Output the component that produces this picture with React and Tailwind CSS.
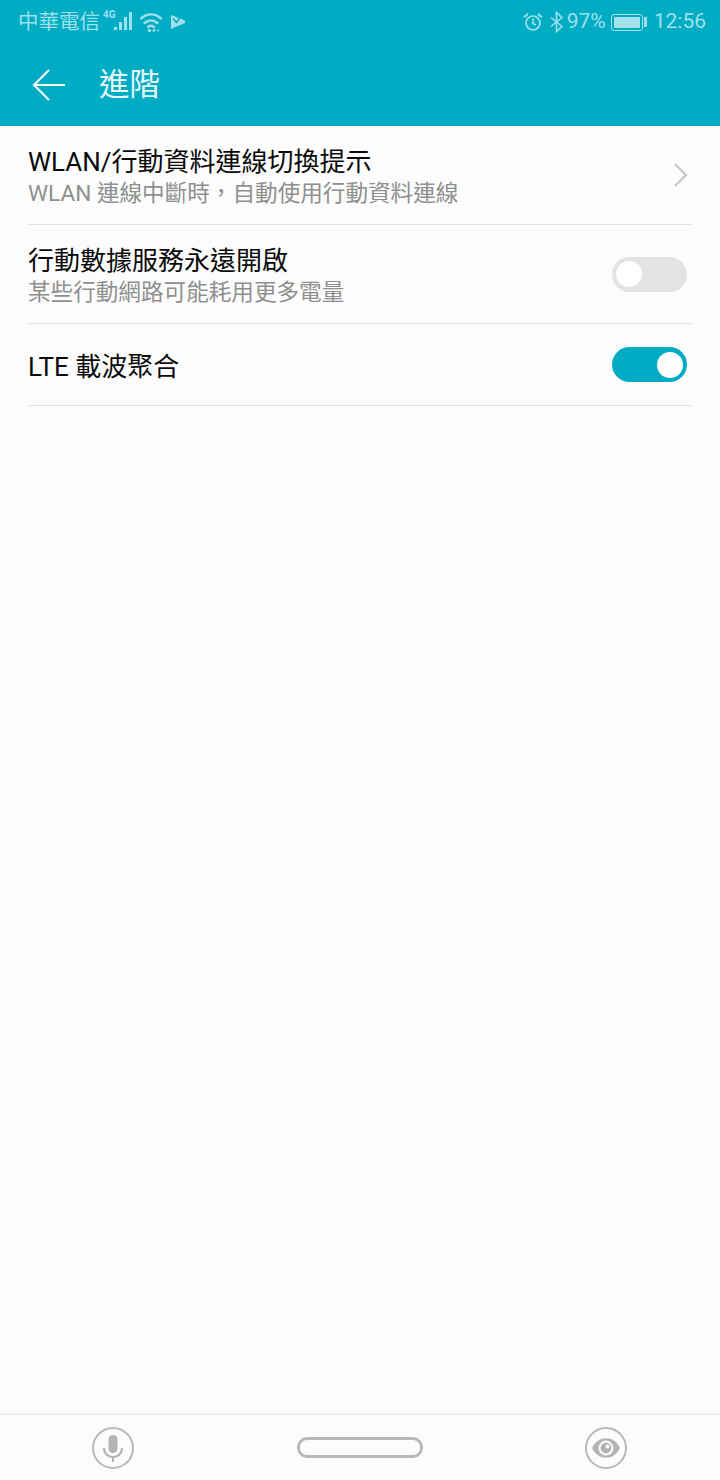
const FONT = "font-['Roboto','Noto_Sans_CJK_TC',sans-serif]";

function Signal() {
  return (
    <svg width="34" height="24" viewBox="0 0 34 24" className="text-[#9fe0ea]">
      <text x="0" y="8" fontSize="10" fontWeight="700" fill="currentColor" fontFamily="Roboto">4G</text>
      <rect x="11" y="17" width="3" height="3" fill="currentColor" />
      <rect x="16" y="12" width="3" height="8" fill="currentColor" />
      <rect x="21" y="7" width="3" height="13" fill="currentColor" />
      <rect x="26" y="2" width="3" height="18" fill="currentColor" />
    </svg>
  );
}

function Wifi() {
  return (
    <svg width="24" height="24" viewBox="0 0 24 24" fill="none" stroke="#9fe0ea" strokeWidth="2.4" strokeLinecap="round">
      <path d="M2 8.5C8 3 16 3 22 8.5" />
      <path d="M5.5 13C9.5 9.5 14.5 9.5 18.5 13" />
      <path d="M9 17C10.8 15.6 13.2 15.6 15 17" />
      <circle cx="10.5" cy="20.5" r="1.7" fill="#9fe0ea" stroke="none" />
      <circle cx="15" cy="20.5" r="1.4" fill="#9fe0ea" stroke="none" />
      <circle cx="19" cy="20.5" r="1" fill="#9fe0ea" stroke="none" />
    </svg>
  );
}

function Flag() {
  return (
    <svg width="16" height="16" viewBox="0 0 16 16">
      <path d="M1 1L15 6.5V9L1 15Z" fill="#9fe0ea" />
      <path d="M3 4.5L6.5 8.5L11.5 1.5" fill="none" stroke="#00acc4" strokeWidth="1.5" />
    </svg>
  );
}

function Alarm() {
  return (
    <svg width="20" height="20" viewBox="0 0 20 20" fill="none" stroke="#9fe0ea" strokeWidth="1.7">
      <circle cx="10" cy="11" r="7" />
      <path d="M10 6.5V11.5L13 13" />
      <path d="M1.2 5.2L5 1.8M18.8 5.2L15 1.8" strokeWidth="2" />
    </svg>
  );
}

function Bluetooth() {
  return (
    <svg width="15" height="22" viewBox="0 0 15 22" fill="none" stroke="#9fe0ea" strokeWidth="1.6">
      <path d="M2 6.5L13 15.5L7.5 20.5V1.5L13 6.5L2 15.5" />
    </svg>
  );
}

function Battery() {
  return (
    <div className="flex items-center gap-[1px]">
      <div className="w-[32px] h-[17px] rounded-[3px] border border-[#9fe0ea] p-[2px]">
        <div className="w-full h-full rounded-[1px] bg-[#a5e1ea]" />
      </div>
      <div className="w-[3px] h-[10px] rounded-r-[1px] bg-[#9fe0ea]" />
    </div>
  );
}

function Toggle({ on }) {
  return (
    <div className={`w-[75px] h-[35px] rounded-full p-[4px] flex ${on ? "bg-[#00acc4] justify-end" : "bg-[#e3e3e3] justify-start"}`}>
      <div className="w-[26px] h-[26px] mt-[0.5px] rounded-full bg-white" />
    </div>
  );
}

function Row({ title, sub, right, className }) {
  return (
    <div className={`flex items-center justify-between border-b border-[#e4e4e4] ${className}`}>
      <div className="flex flex-col pt-[5px]">
        <div className="text-[26px] leading-[32px] text-[#0a0a0a]">{title}</div>
        {sub && <div className="text-[22.6px] leading-[32px] text-[#8f8f8f] whitespace-nowrap">{sub}</div>}
      </div>
      {right}
    </div>
  );
}

export default function App() {
  return (
    <div className={`w-[720px] h-[1480px] flex flex-col bg-[#fcfcfc] ${FONT}`}>
      <div className="h-[126px] bg-[#00acc4] flex flex-col shrink-0">
        <div className="h-[44px] pl-[18px] pr-[14px] flex items-center justify-between">
          <div className="flex items-center">
            <span className="text-[20.5px] text-[#9fe0ea]">中華電信</span>
            <span className="ml-[3px]"><Signal /></span>
            <span className="ml-[2px]"><Wifi /></span>
            <span className="ml-[7px]"><Flag /></span>
          </div>
          <div className="flex items-center text-[#9fe0ea] text-[21px]">
            <Alarm />
            <span className="ml-[6px]"><Bluetooth /></span>
            <span className="ml-[3px]">97%</span>
            <span className="ml-[5px]"><Battery /></span>
            <span className="ml-[7px]">12:56</span>
          </div>
        </div>
        <div className="flex-1 flex items-center pl-[32px] pt-[1px]">
          <svg width="34" height="34" viewBox="0 0 34 34" fill="none" stroke="#eefafc" strokeWidth="2.2" className="mb-[2px]">
            <path d="M33 17H3M17 2L2 17L17 32" />
          </svg>
          <span className="ml-[33px] text-[30.5px] leading-none text-[#e8f8fa]">進階</span>
        </div>
      </div>

      <div className="flex-1 flex flex-col px-[28px]">
        <Row
          className="h-[99px]"
          title="WLAN/行動資料連線切換提示"
          sub="WLAN 連線中斷時，自動使用行動資料連線"
          right={
            <svg width="16" height="26" viewBox="0 0 16 26" fill="none" stroke="#c6c6c6" strokeWidth="2.2" className="mr-[3px]">
              <path d="M2 2L13 13L2 24" />
            </svg>
          }
        />
        <Row
          className="h-[99px] pr-[5px]"
          title="行動數據服務永遠開啟"
          sub="某些行動網路可能耗用更多電量"
          right={<Toggle />}
        />
        <Row
          className="h-[82px] pr-[5px]"
          title="LTE 載波聚合"
          right={<Toggle on />}
        />
      </div>

      <div className="h-[67px] shrink-0 border-t-2 border-[#ececec] flex items-center justify-between pl-[92px] pr-[93px]">
        <svg width="42" height="42" viewBox="0 0 42 42" fill="none">
          <circle cx="21" cy="21" r="20" stroke="#b8b8b8" strokeWidth="2" />
          <rect x="16.5" y="8" width="9" height="18" rx="4.5" fill="#b3b3b3" />
          <path d="M12 21C12 33 30 33 30 21M21 30V35" stroke="#b3b3b3" strokeWidth="2" />
        </svg>
        <div className="w-[126px] h-[21px] rounded-[10px] border-[3px] border-[#b8b8b8]" />
        <svg width="42" height="42" viewBox="0 0 42 42" fill="none">
          <circle cx="21" cy="21" r="20" stroke="#b8b8b8" strokeWidth="2" />
          <path d="M7 21C13 8 29 8 35 21C29 34 13 34 7 21Z" fill="#b3b3b3" />
          <circle cx="21" cy="21" r="7.5" fill="#fcfcfc" />
          <circle cx="21" cy="21" r="5.4" fill="#b3b3b3" />
          <circle cx="22.5" cy="19.5" r="2" fill="#fcfcfc" />
        </svg>
      </div>
    </div>
  );
}
